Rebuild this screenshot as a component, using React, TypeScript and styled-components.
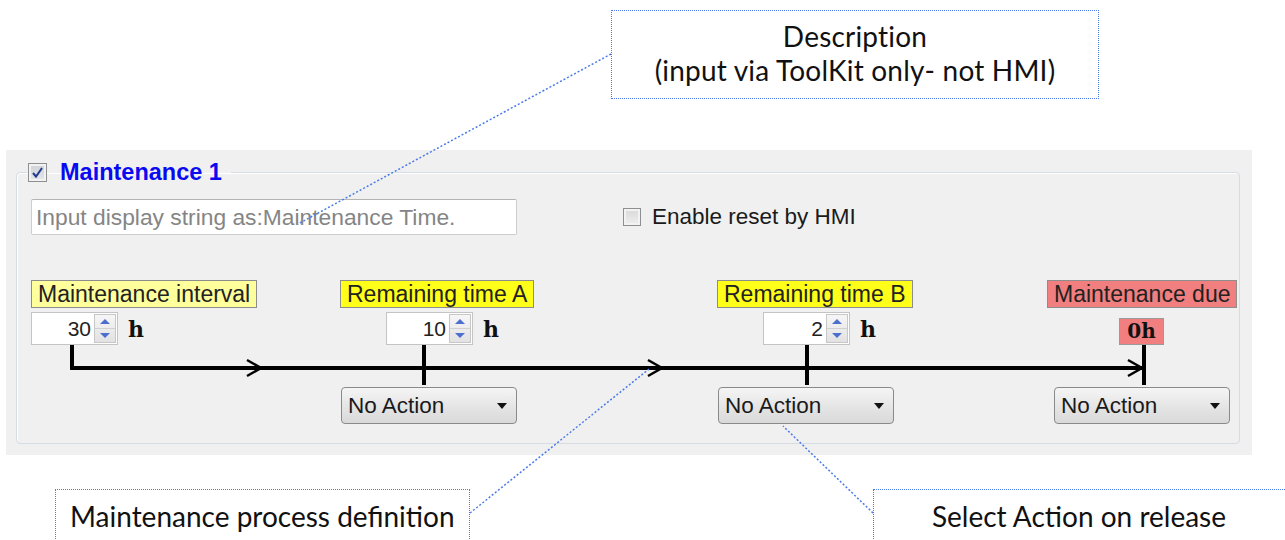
import React from 'react';
import styled, { createGlobalStyle } from 'styled-components';

const GlobalStyle = createGlobalStyle`
  html, body {
    margin: 0;
    padding: 0;
    background: #ffffff;
    overflow: hidden;
  }
  body {
    font-family: "Liberation Sans", Arial, sans-serif;
  }
`;

const Page = styled.div`
  position: relative;
  width: 1285px;
  height: 540px;
  overflow: hidden;
  background: #ffffff;
`;

const TopArea = styled.div`
  height: 150px;
  box-sizing: border-box;
  padding: 10px 0 0 611px;
`;

const BottomArea = styled.div`
  display: flex;
  padding-top: 34px;
`;

const Callout = styled.div<{ $width: number; $height: number; $left?: number; $align?: string }>`
  flex: none;
  box-sizing: border-box;
  width: ${(p) => p.$width}px;
  height: ${(p) => p.$height}px;
  margin-left: ${(p) => p.$left ?? 0}px;
  border: 1.5px dotted #4b7bea;
  background: #ffffff;
  font-family: Lato, "Open Sans", sans-serif;
  font-size: 28px;
  line-height: 34px;
  color: #111111;
  text-align: ${(p) => p.$align ?? 'center'};
`;

const DescriptionBox = styled(Callout)`
  padding-top: 8px;
  letter-spacing: 0.2px;
`;

const BottomCallout = styled(Callout)<{ $padLeft?: number; $padRight?: number }>`
  padding: 9px ${(p) => p.$padRight ?? 0}px 0 ${(p) => p.$padLeft ?? 0}px;
  white-space: nowrap;
`;

const Panel = styled.div`
  margin-left: 6px;
  width: 1246px;
  height: 305px;
  box-sizing: border-box;
  padding: 10px 12px 0 10px;
  background: #f0f0f0;
`;

const GroupBox = styled.fieldset`
  margin: 0;
  padding: 15px 0 19px 14px;
  border: 1px solid #d5dce4;
  border-radius: 4px;
  box-shadow: inset 1px 1px 0 #ffffff;
`;

const Legend = styled.legend`
  margin-left: -4px;
  padding: 0 9px 0 1px;
  display: flex;
  align-items: center;
  gap: 13px;
  height: 24px;
`;

const Title = styled.span`
  font-size: 23.5px;
  font-weight: bold;
  line-height: 24px;
  color: #0a0af0;
`;

const Box = styled.span<{ $size: number; $checked?: boolean }>`
  flex: none;
  display: flex;
  align-items: center;
  justify-content: center;
  box-sizing: border-box;
  width: ${(p) => p.$size}px;
  height: ${(p) => p.$size}px;
  border: 1px solid #8e8f8f;
  background: ${(p) => (p.$checked ? 'linear-gradient(#cfd2d6, #e4e6e8)' : 'linear-gradient(#d9d9d9, #eeeeee)')};
  box-shadow: inset 0 0 0 2px #f2f2f2;
`;

const TopRow = styled.div`
  display: flex;
  align-items: center;
`;

const TextField = styled.input`
  box-sizing: border-box;
  width: 486px;
  height: 36px;
  padding: 0 4px;
  border: 1px solid #cdcdcd;
  border-top-color: #b4b4b4;
  border-radius: 2px;
  background: #ffffff;
  font-family: "Liberation Sans", Arial, sans-serif;
  font-size: 22.8px;
  outline: none;
  &::placeholder {
    color: #858585;
  }
`;

const CheckLabel = styled.label`
  display: flex;
  align-items: center;
  gap: 11px;
  margin-left: 106px;
  font-size: 22.5px;
  color: #1a1a1a;
`;

const Timeline = styled.div`
  position: relative;
  margin-top: 45px;
  height: 144px;
  display: grid;
  grid-template-columns: 309px 377px 330px 1fr;
`;

const TimelineDrawing = styled.svg`
  position: absolute;
  left: 0;
  top: 0;
  z-index: 0;
`;

const Stage = styled.div`
  position: relative;
  z-index: 1;
  display: flex;
  flex-direction: column;
  align-items: flex-start;
`;

const tones: Record<string, string> = {
  pale: '#ffff9c',
  yellow: '#ffff1a',
  red: '#f27f7f',
};

const Tag = styled.div<{ $tone: string }>`
  box-sizing: border-box;
  height: 28px;
  padding: 0 6px;
  border: 1px solid #8d8d8d;
  background: ${(p) => tones[p.$tone]};
  font-size: 23px;
  line-height: 26px;
  color: #222222;
  white-space: nowrap;
`;

const ValueRow = styled.div<{ $shift: number }>`
  display: flex;
  align-items: flex-end;
  height: 33px;
  margin-top: 4px;
  margin-left: ${(p) => p.$shift}px;
`;

const SpinBox = styled.div`
  box-sizing: border-box;
  width: 87px;
  height: 33px;
  display: flex;
  justify-content: flex-end;
  border: 1px solid #c4c4c4;
  background: #ffffff;
`;

const SpinValue = styled.span`
  font-size: 21px;
  line-height: 31px;
  padding-right: 2px;
  color: #222222;
`;

const SpinButtons = styled.div`
  box-sizing: border-box;
  width: 22px;
  margin: 1px;
  display: flex;
  flex-direction: column;
  border: 1px solid #c7c7c7;
  background: linear-gradient(#f6f6f6, #e2e2e2);
`;

const SpinHalf = styled.div<{ $down?: boolean }>`
  flex: 1;
  display: flex;
  align-items: center;
  justify-content: center;
  border-top: ${(p) => (p.$down ? '1px solid #d0d0d0' : 'none')};
  &::after {
    content: '';
    border-left: 5px solid transparent;
    border-right: 5px solid transparent;
    ${(p) => (p.$down ? 'border-top: 5px solid #4c6fcf;' : 'border-bottom: 5px solid #4c6fcf;')}
  }
`;

const Unit = styled.span`
  margin-left: 10px;
  align-self: center;
  font-family: "DejaVu Serif", "Liberation Serif", serif;
  font-weight: bold;
  font-size: 22px;
  color: #111111;
`;

const DueValue = styled.div`
  box-sizing: border-box;
  width: 45px;
  height: 27px;
  border: 1px solid #9a9a9a;
  background: #f27f7f;
  font-family: "DejaVu Serif", "Liberation Serif", serif;
  font-weight: bold;
  font-size: 20px;
  line-height: 25px;
  text-align: center;
  color: #111111;
`;

const Dropdown = styled.div<{ $shift: number }>`
  box-sizing: border-box;
  width: 176px;
  height: 37px;
  margin-top: 42px;
  margin-left: ${(p) => p.$shift}px;
  padding: 0 9px 0 6px;
  display: flex;
  align-items: center;
  justify-content: space-between;
  border: 1px solid #8a8a8a;
  border-radius: 4px;
  background: linear-gradient(#f5f5f5, #e6e6e6 50%, #d9d9d9);
  font-size: 22.5px;
  color: #1a1a1a;
  &::after {
    content: '';
    border-left: 5px solid transparent;
    border-right: 5px solid transparent;
    border-top: 6px solid #111111;
  }
`;

const Connectors = styled.svg`
  position: absolute;
  left: 0;
  top: 0;
  z-index: 5;
  pointer-events: none;
`;

const Spinner = ({ value }: { value: number }) => (
  <SpinBox>
    <SpinValue>{value}</SpinValue>
    <SpinButtons>
      <SpinHalf />
      <SpinHalf $down />
    </SpinButtons>
  </SpinBox>
);

const Chevron = ({ x }: { x: number }) => (
  <polyline points={`${x},80 ${x + 14},88 ${x},96`} fill="none" stroke="#000" strokeWidth={2.5} />
);

const App = () => (
  <Page>
    <GlobalStyle />
    <TopArea>
      <DescriptionBox $width={488} $height={89}>
        Description
        <br />
        (input via ToolKit only- not HMI)
      </DescriptionBox>
    </TopArea>

    <Panel>
      <GroupBox>
        <Legend>
          <Box $size={19} $checked>
            <svg width="13" height="13" viewBox="0 0 13 13">
              <path d="M2 7 L5 10.5 L11 2" fill="none" stroke="#1f3b8f" strokeWidth={2} />
            </svg>
          </Box>
          <Title>Maintenance 1</Title>
        </Legend>

        <TopRow>
          <TextField readOnly placeholder="Input display string as:Maintenance Time." />
          <CheckLabel>
            <Box $size={18} />
            Enable reset by HMI
          </CheckLabel>
        </TopRow>

        <Timeline>
          <TimelineDrawing width="1209" height="144">
            <path d="M41 65 V88 H1113" fill="none" stroke="#000" strokeWidth={4} />
            <path d="M393 65 V105 M776 65 V105 M1113 65 V105" fill="none" stroke="#000" strokeWidth={4} />
            <Chevron x={216} />
            <Chevron x={617} />
            <Chevron x={1097} />
          </TimelineDrawing>

          <Stage>
            <Tag $tone="pale">Maintenance interval</Tag>
            <ValueRow $shift={0}>
              <Spinner value={30} />
              <Unit>h</Unit>
            </ValueRow>
          </Stage>

          <Stage>
            <Tag $tone="yellow">Remaining time A</Tag>
            <ValueRow $shift={46}>
              <Spinner value={10} />
              <Unit>h</Unit>
            </ValueRow>
            <Dropdown $shift={1}>No Action</Dropdown>
          </Stage>

          <Stage>
            <Tag $tone="yellow">Remaining time B</Tag>
            <ValueRow $shift={46}>
              <Spinner value={2} />
              <Unit>h</Unit>
            </ValueRow>
            <Dropdown $shift={1}>No Action</Dropdown>
          </Stage>

          <Stage>
            <Tag $tone="red">Maintenance due</Tag>
            <ValueRow $shift={72}>
              <DueValue>0h</DueValue>
            </ValueRow>
            <Dropdown $shift={7}>No Action</Dropdown>
          </Stage>
        </Timeline>
      </GroupBox>
    </Panel>

    <BottomArea>
      <BottomCallout $width={415} $height={60} $left={55} $align="left" $padLeft={14}>
        Maintenance process definition
      </BottomCallout>
      <BottomCallout $width={420} $height={60} $left={403} $padRight={8}>
        Select Action on release
      </BottomCallout>
    </BottomArea>

    <Connectors width="1285" height="540">
      <g stroke="#4b7bea" strokeWidth={1.5} strokeDasharray="2 2" fill="none">
        <line x1={611} y1={54} x2={298} y2={224} />
        <line x1={470} y1={513} x2={649} y2={369} />
        <line x1={873} y1={513} x2={783} y2={426} />
      </g>
    </Connectors>
  </Page>
);

export default App;
